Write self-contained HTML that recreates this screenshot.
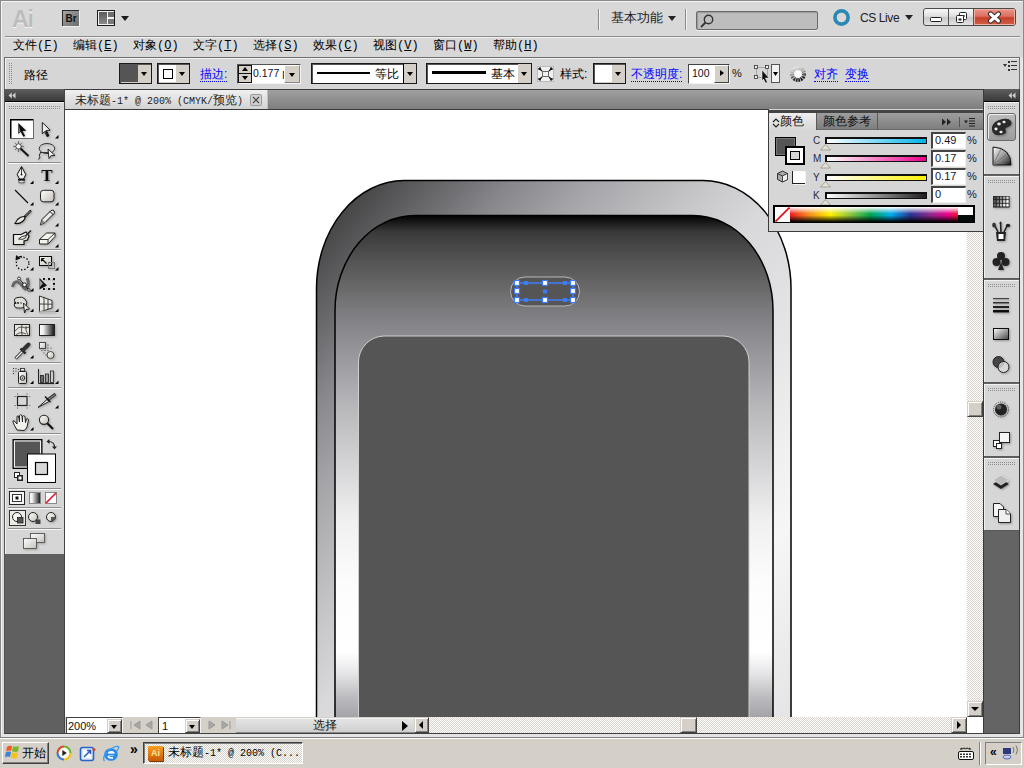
<!DOCTYPE html>
<html><head><meta charset="utf-8">
<style>
*{margin:0;padding:0;box-sizing:border-box}
html,body{width:1024px;height:768px;overflow:hidden;background:#d6d6d6;font-family:"Liberation Sans",sans-serif;font-size:12px;color:#000}
.a{position:absolute}
#frame{left:0;top:0;width:1024px;height:738px;background:#d8d8d8;border-top:1px solid #8a8a8a;border-left:1px solid #8a8a8a;border-right:1px solid #8a8a8a}
.menu span{position:absolute;top:37px;font-size:12px;line-height:16px;white-space:nowrap}
.u{text-decoration:underline}
.lk{font-size:12px;line-height:16px;color:#0000ff;border-bottom:1px dotted #0000ff;height:16px;overflow:visible}
.cn{color:#000}
.m{font-family:"Liberation Mono",monospace;font-size:10px}
</style></head><body>
<div class="a" id="frame"></div>
<!-- title row -->
<div class="a" style="left:1px;top:1px;width:1022px;height:1px;background:#f4f4f4"></div>
<div class="a" style="left:1px;top:1px;width:1px;height:736px;background:#f4f4f4"></div>
<div class="a" style="left:12px;top:6px;font-size:23px;font-weight:bold;color:#bcbcbc;letter-spacing:-1px;text-shadow:0 1px 0 #f4f4f4;line-height:26px">Ai</div>
<div class="a" style="left:62px;top:10px;width:17px;height:16px;background:linear-gradient(135deg,#a4a4a4,#6c6c6c);border-top:1px solid #2a2a2a;border-left:1px solid #2a2a2a;box-shadow:1px 1px 0 #f0f0f0;font-size:10px;font-weight:bold;color:#111;text-align:center;line-height:15px">Br</div>
<div class="a" style="left:97px;top:10px;width:18px;height:16px;border:1px solid #1c1c1c;background:#f2f2f2"></div>
<div class="a" style="left:99px;top:12px;width:8px;height:12px;background:linear-gradient(#5a5a5a,#8a8a8a)"></div>
<div class="a" style="left:108px;top:12px;width:6px;height:5px;background:#6e6e6e"></div>
<div class="a" style="left:108px;top:19px;width:6px;height:5px;background:#7a7a7a"></div>
<div class="a" style="left:121px;top:16px;width:0;height:0;border-left:4px solid transparent;border-right:4px solid transparent;border-top:5px solid #1c1c1c"></div>
<div class="a" style="left:598px;top:9px;width:1px;height:21px;background:#8a8a8a;box-shadow:1px 0 0 #f2f2f2"></div>
<div class="a" style="left:611px;top:9px;font-size:13px;line-height:18px;color:#222">基本功能</div>
<div class="a" style="left:668px;top:16px;width:0;height:0;border-left:4px solid transparent;border-right:4px solid transparent;border-top:5px solid #222"></div>
<div class="a" style="left:685px;top:9px;width:1px;height:21px;background:#8a8a8a;box-shadow:1px 0 0 #f2f2f2"></div>
<div class="a" style="left:696px;top:11px;width:122px;height:19px;border:1px solid #6a6a6a;border-radius:2px;background:#bdbdbd;box-shadow:inset 1px 1px 1px #9a9a9a,0 1px 0 #f0f0f0"></div>
<svg class="a" style="left:699px;top:13px" width="16" height="16"><circle cx="9.5" cy="6.5" r="4.2" fill="none" stroke="#333" stroke-width="1.4"/><line x1="6.5" y1="9.5" x2="2" y2="14" stroke="#333" stroke-width="1.8"/></svg>
<svg class="a" style="left:832px;top:8px" width="20" height="20"><circle cx="9.5" cy="9.5" r="6.6" fill="none" stroke="#2a88b2" stroke-width="3.6"/></svg>
<div class="a" style="left:860px;top:10px;font-size:12px;line-height:16px;color:#222;letter-spacing:-0.4px">CS Live</div>
<div class="a" style="left:905px;top:15px;width:0;height:0;border-left:4px solid transparent;border-right:4px solid transparent;border-top:5px solid #222"></div>
<div class="a" style="left:923px;top:8px;width:93px;height:18px;border:1px solid #4a4a4a;border-radius:3px;background:linear-gradient(#f8f8f8,#e0e0e0 45%,#c8c8c8 55%,#e4e4e4);overflow:hidden">
 <div class="a" style="left:24px;top:0;width:1px;height:16px;background:#555"></div>
 <div class="a" style="left:49px;top:0;width:1px;height:16px;background:#555"></div>
 <div class="a" style="left:50px;top:0;width:41px;height:16px;background:linear-gradient(#e8968a,#dc7060 45%,#c4402a 55%,#d0604a);box-shadow:inset 0 0 0 1px #f0b0a0"></div>
 <div class="a" style="left:6px;top:8px;width:12px;height:5px;background:#fff;border:1px solid #222;border-radius:1.5px"></div>
 <svg class="a" style="left:31px;top:2px" width="14" height="13"><rect x="4.5" y="1.5" width="7" height="7" rx="1" fill="#fff" stroke="#222"/><rect x="7" y="4" width="2.5" height="2" fill="#222"/><rect x="1.5" y="4.5" width="7" height="7" rx="1" fill="#fff" stroke="#222"/><rect x="3.5" y="7.5" width="3" height="2" fill="#222"/></svg>
 <svg class="a" style="left:63px;top:2px" width="16" height="13"><path d="M3.5,3 L11.5,10 M11.5,3 L3.5,10" stroke="#3a2a2a" stroke-width="5" stroke-linecap="round"/><path d="M3.5,3 L11.5,10 M11.5,3 L3.5,10" stroke="#fff" stroke-width="3" stroke-linecap="round"/></svg>
</div>

<div class="a" style="left:5px;top:36px;width:1015px;height:1px;background:#8c8c8c"></div>
<div class="a" style="left:5px;top:37px;width:1015px;height:1px;background:#f0f0f0"></div>
<!-- menu -->
<div class="menu">
<span style="left:13px">文件<span class="m" style="position:static">(<span class="u" style="position:static">F</span>)</span></span>
<span style="left:73px">编辑<span class="m" style="position:static">(<span class="u" style="position:static">E</span>)</span></span>
<span style="left:133px">对象<span class="m" style="position:static">(<span class="u" style="position:static">O</span>)</span></span>
<span style="left:193px">文字<span class="m" style="position:static">(<span class="u" style="position:static">T</span>)</span></span>
<span style="left:253px">选择<span class="m" style="position:static">(<span class="u" style="position:static">S</span>)</span></span>
<span style="left:313px">效果<span class="m" style="position:static">(<span class="u" style="position:static">C</span>)</span></span>
<span style="left:373px">视图<span class="m" style="position:static">(<span class="u" style="position:static">V</span>)</span></span>
<span style="left:433px">窗口<span class="m" style="position:static">(<span class="u" style="position:static">W</span>)</span></span>
<span style="left:493px">帮助<span class="m" style="position:static">(<span class="u" style="position:static">H</span>)</span></span>
</div>
<!-- control bar -->
<div class="a" style="left:4px;top:57px;width:1016px;height:33px;border:1px solid #6e6e6e;background:#d6d6d6;box-shadow:inset 1px 1px 0 #f2f2f2"></div>
<!-- control bar items -->
<div class="a" style="left:9px;top:63px;width:3px;height:22px;background-image:linear-gradient(90deg,transparent 50%,#d6d6d6 50%),linear-gradient(#8e8e8e 50%,transparent 50%);background-size:2px 2px"></div>
<div class="a cn" style="left:24px;top:67px;font-size:12px;line-height:16px">路径</div>
<!-- fill combo -->
<div class="a" style="left:119px;top:63px;width:33px;height:21px;border:1px solid #1a1a1a;background:#d4d0c8;box-shadow:inset 1px 1px 0 #555"></div>
<div class="a" style="left:121px;top:65px;width:17px;height:17px;background:#555"></div>
<div class="a" style="left:141px;top:72px;border-left:3px solid transparent;border-right:3px solid transparent;border-top:4px solid #000"></div>
<!-- stroke combo -->
<div class="a" style="left:157px;top:63px;width:33px;height:21px;border:1px solid #1a1a1a;background:#d4d0c8;box-shadow:inset 1px 1px 0 #555"></div>
<div class="a" style="left:159px;top:65px;width:17px;height:17px;background:#fff"></div>
<div class="a" style="left:163px;top:69px;width:10px;height:10px;border:1px solid #000"></div>
<div class="a" style="left:179px;top:72px;border-left:3px solid transparent;border-right:3px solid transparent;border-top:4px solid #000"></div>
<div class="a lk" style="left:200px;top:66px">描边:</div>
<!-- spinner -->
<div class="a" style="left:237px;top:64px;width:64px;height:20px;background:#fff;border:1px solid #555;border-right-color:#f4f4f4;border-bottom-color:#f4f4f4"></div>
<div class="a" style="left:238px;top:65px;width:14px;height:18px;background:#d4d0c8;border:1px solid #111"></div>
<div class="a" style="left:238px;top:73px;width:14px;height:1px;background:#111"></div>
<div class="a" style="left:242px;top:67px;border-left:3px solid transparent;border-right:3px solid transparent;border-bottom:4px solid #000"></div>
<div class="a" style="left:242px;top:76px;border-left:3px solid transparent;border-right:3px solid transparent;border-top:4px solid #000"></div>
<div class="a" style="left:253px;top:67px;font-size:10.5px;line-height:13px;color:#101028;width:31px;overflow:hidden;white-space:nowrap">0.177 p</div>
<div class="a" style="left:284px;top:65px;width:16px;height:18px;background:#d4d0c8;border:1px solid #888;border-top-color:#fff;border-left-color:#fff"></div>
<div class="a" style="left:289px;top:73px;border-left:3px solid transparent;border-right:3px solid transparent;border-top:4px solid #000"></div>
<!-- stroke profile combos -->
<div class="a" style="left:311px;top:63px;width:106px;height:21px;border:1px solid #1a1a1a;background:#fff;box-shadow:inset 1px 1px 0 #555"></div>
<div class="a" style="left:317px;top:72px;width:53px;height:2px;background:#000"></div>
<div class="a cn" style="left:375px;top:66px;font-size:12px;line-height:16px">等比</div>
<div class="a" style="left:403px;top:64px;width:1px;height:19px;background:#000"></div>
<div class="a" style="left:404px;top:64px;width:12px;height:19px;background:#d4d0c8"></div>
<div class="a" style="left:407px;top:72px;border-left:3px solid transparent;border-right:3px solid transparent;border-top:4px solid #000"></div>
<div class="a" style="left:426px;top:63px;width:106px;height:21px;border:1px solid #1a1a1a;background:#fff;box-shadow:inset 1px 1px 0 #555"></div>
<div class="a" style="left:432px;top:71px;width:54px;height:3px;background:#000"></div>
<div class="a cn" style="left:491px;top:66px;font-size:12px;line-height:16px">基本</div>
<div class="a" style="left:518px;top:64px;width:13px;height:19px;background:#d4d0c8"></div>
<div class="a" style="left:521px;top:72px;border-left:3px solid transparent;border-right:3px solid transparent;border-top:4px solid #000"></div>
<svg class="a" style="left:537px;top:66px" width="17" height="16"><rect x="0.5" y="0.5" width="16" height="15" fill="#f0f0f0" stroke="#bbb"/><rect x="5.5" y="5.5" width="6" height="5" fill="none" stroke="#666"/><path d="M2,2 l3,3 M2,2 v2 M2,2 h2 M15,2 l-3,3 M15,2 v2 M15,2 h-2 M2,14 l3,-3 M2,14 v-2 M2,14 h2 M15,14 l-3,-3 M15,14 v-2 M15,14 h-2" stroke="#111" stroke-width="1.2" fill="none"/></svg>
<div class="a cn" style="left:560px;top:66px;font-size:12px;line-height:16px">样式:</div>
<div class="a" style="left:593px;top:63px;width:33px;height:21px;border:1px solid #1a1a1a;background:#d4d0c8;box-shadow:inset 1px 1px 0 #555"></div>
<div class="a" style="left:595px;top:65px;width:17px;height:17px;background:#fff"></div>
<div class="a" style="left:615px;top:72px;border-left:3px solid transparent;border-right:3px solid transparent;border-top:4px solid #000"></div>
<div class="a lk" style="left:631px;top:66px">不透明度:</div>
<div class="a" style="left:688px;top:64px;width:42px;height:20px;background:#fff;border:1px solid #444;border-right-color:#f4f4f4;border-bottom-color:#f4f4f4"></div>
<div class="a" style="left:692px;top:67px;font-size:10.5px;line-height:13px;color:#101028">100</div>
<div class="a" style="left:714px;top:65px;width:15px;height:18px;background:#d4d0c8;border:1px solid #444;border-top-color:#fff;border-left-color:#fff"></div>
<div class="a" style="left:720px;top:70px;border-top:3px solid transparent;border-bottom:3px solid transparent;border-left:4px solid #000"></div>
<div class="a" style="left:732px;top:66px;font-size:11px;line-height:14px;color:#111">%</div>
<svg class="a" style="left:754px;top:64px" width="26" height="20"><rect x="2.5" y="3.5" width="11" height="10" fill="none" stroke="#777" stroke-dasharray="1,1"/><g fill="#eee" stroke="#333" stroke-width="0.8"><rect x="0.5" y="1.5" width="3" height="3"/><rect x="11.5" y="1.5" width="3" height="3"/><rect x="0.5" y="11.5" width="3" height="3"/></g><path d="M8,6 L15,14 L11.5,14 L13.5,18.5 L11.5,19 L9.5,15 L8,17 Z" fill="#111" stroke="#fff" stroke-width="0.5"/><rect x="17.5" y="0.5" width="8" height="18" fill="#f2f2f2" stroke="#555"/><path d="M19,8 h5 l-2.5,4 z" fill="#000"/></svg>
<svg class="a" style="left:790px;top:66px" width="16" height="16"><defs><linearGradient id="gr" x1="0" y1="0" x2="0.3" y2="1"><stop offset="0" stop-color="#e8e8e8"/><stop offset="0.5" stop-color="#9a9a9a"/><stop offset="1" stop-color="#1a1a1a"/></linearGradient></defs><circle cx="8" cy="8" r="6" fill="none" stroke="url(#gr)" stroke-width="4" stroke-dasharray="1.6,0.8"/><circle cx="8" cy="8" r="3.8" fill="#fafafa"/></svg>
<div class="a lk" style="left:814px;top:66px">对齐</div>
<div class="a lk" style="left:845px;top:66px">变换</div>
<svg class="a" style="left:1002px;top:60px" width="16" height="12"><path d="M1,4 h4 l-2,3 z" fill="#333"/><g fill="#333"><rect x="6" y="1" width="2" height="2"/><rect x="9" y="1" width="6" height="1"/><rect x="6" y="5" width="2" height="2"/><rect x="9" y="5" width="6" height="1"/><rect x="6" y="9" width="2" height="2"/><rect x="9" y="9" width="6" height="1"/></g></svg>
<!-- doc tab row -->
<div class="a" style="left:65px;top:89px;width:919px;height:21px;background:linear-gradient(#a0a0a0,#7e7e7e);border-top:1px solid #3a3a3a;border-bottom:1px solid #3a3a3a"></div>
<div class="a" style="left:65px;top:90px;width:203px;height:19px;background:linear-gradient(#f0f0f0,#d2d2d2);border-right:1px solid #c0c0c0"></div>
<div class="a" style="left:75px;top:92px;font-size:12px;line-height:16px;color:#222;white-space:pre">未标题<span class="m">-1* @ 200% (CMYK/</span>预览<span class="m">)</span></div>
<div class="a" style="left:250px;top:94px;width:12px;height:12px;border:1px solid #9a9a9a;border-radius:2px;background:#cfcfcf"></div>
<svg class="a" style="left:250px;top:94px" width="12" height="12"><path d="M3,3 L9,9 M9,3 L3,9" stroke="#444" stroke-width="1.1"/></svg>

<!-- tools panel -->
<div class="a" style="left:4px;top:89px;width:61px;height:645px;background:#606060;border-left:1px solid #555;border-right:1px solid #444"></div>
<div class="a" style="left:5px;top:89px;width:59px;height:13px;background:linear-gradient(#5e5e5e,#3a3a3a);border-bottom:1px solid #000"></div>
<svg class="a" style="left:8px;top:92px" width="10" height="8"><path d="M0.5,3.5 L3.8,0.5 V6.5 Z M4.2,3.5 L7.5,0.5 V6.5 Z" fill="#d0d0d0"/></svg>
<div class="a" style="left:5px;top:102px;width:59px;height:452px;background:#d6d6d6;box-shadow:inset 1px 1px 0 #f2f2f2"></div>
<div class="a" style="left:9px;top:106px;width:52px;height:4px;background-image:linear-gradient(90deg,transparent 50%,#d6d6d6 50%),linear-gradient(#8e8e8e 50%,transparent 50%);background-size:2px 2px"></div>
<svg class="a" style="left:0;top:0" width="66" height="560">
<defs>
<linearGradient id="tw" x1="0" y1="0" x2="1" y2="1"><stop offset="0" stop-color="#fff"/><stop offset="1" stop-color="#c4c0b8"/></linearGradient>
<linearGradient id="tg" x1="0" y1="0" x2="1" y2="0"><stop offset="0" stop-color="#fff"/><stop offset="0.25" stop-color="#eee"/><stop offset="1" stop-color="#111"/></linearGradient>
<filter id="sh" x="-30%" y="-30%" width="160%" height="160%"><feDropShadow dx="1" dy="1" stdDeviation="0.8" flood-color="#000" flood-opacity="0.25"/></filter>
</defs>
<rect x="8" y="162" width="53" height="1" fill="#8e8e8e"/><rect x="8" y="163" width="53" height="1" fill="#f8f8f8"/><rect x="8" y="249" width="53" height="1" fill="#8e8e8e"/><rect x="8" y="250" width="53" height="1" fill="#f8f8f8"/><rect x="8" y="317" width="53" height="1" fill="#8e8e8e"/><rect x="8" y="318" width="53" height="1" fill="#f8f8f8"/><rect x="8" y="362" width="53" height="1" fill="#8e8e8e"/><rect x="8" y="363" width="53" height="1" fill="#f8f8f8"/><rect x="8" y="387" width="53" height="1" fill="#8e8e8e"/><rect x="8" y="388" width="53" height="1" fill="#f8f8f8"/><rect x="8" y="433" width="53" height="1" fill="#8e8e8e"/><rect x="8" y="434" width="53" height="1" fill="#f8f8f8"/><rect x="8" y="488" width="53" height="1" fill="#8e8e8e"/><rect x="8" y="489" width="53" height="1" fill="#f8f8f8"/><rect x="8" y="507" width="53" height="1" fill="#8e8e8e"/><rect x="8" y="508" width="53" height="1" fill="#f8f8f8"/><rect x="8" y="528" width="53" height="1" fill="#8e8e8e"/><rect x="8" y="529" width="53" height="1" fill="#f8f8f8"/>
<path d="M55,138.5 h3.5 v-3.5 z" fill="#000"/><path d="M30,184 h3.5 v-3.5 z" fill="#000"/><path d="M55,184 h3.5 v-3.5 z" fill="#000"/><path d="M30,205.5 h3.5 v-3.5 z" fill="#000"/><path d="M55,205.5 h3.5 v-3.5 z" fill="#000"/><path d="M55,226.5 h3.5 v-3.5 z" fill="#000"/><path d="M55,247.5 h3.5 v-3.5 z" fill="#000"/><path d="M30,270.5 h3.5 v-3.5 z" fill="#000"/><path d="M55,270.5 h3.5 v-3.5 z" fill="#000"/><path d="M30,291.5 h3.5 v-3.5 z" fill="#000"/><path d="M30,312 h3.5 v-3.5 z" fill="#000"/><path d="M55,312 h3.5 v-3.5 z" fill="#000"/><path d="M30,358.5 h3.5 v-3.5 z" fill="#000"/><path d="M30,384 h3.5 v-3.5 z" fill="#000"/><path d="M55,384 h3.5 v-3.5 z" fill="#000"/><path d="M55,408.5 h3.5 v-3.5 z" fill="#000"/><path d="M30,430.5 h3.5 v-3.5 z" fill="#000"/>
<rect x="10.5" y="119.5" width="23" height="19" fill="#fff" stroke="#666" stroke-width="1"/>
<rect x="10" y="119" width="23" height="1.5" fill="#000"/><rect x="10" y="119" width="1.5" height="19" fill="#000"/>
<path d="M18.3,123 L26.3,130.8 L22.5,131 L25.2,136 L23.3,136.8 L20.8,131.8 L18.3,134 Z" fill="#111" filter="url(#sh)"/>
<path d="M18.8,125 L18.8,133 L20.5,131.5 Z" fill="#777"/>
<path d="M42.3,122.5 L50.2,130.2 L46.4,130.5 L49,135.8 L47,136.6 L44.6,131.5 L42.3,133.8 Z" fill="#eeece6" stroke="#111" stroke-width="0.9" filter="url(#sh)"/>
<path d="M45,131 L47.2,136.5 L49,135.8 L46.4,130.5 Z" fill="#111"/>
<g filter="url(#sh)"><path d="M13,146.4 h11 M18.5,141 v11 M14.8,142.7 l7.4,7.4 M22.2,142.7 l-7.4,7.4" stroke="#666" stroke-width="0.9"/><circle cx="18.5" cy="146.4" r="2.6" fill="#f8f8f4" stroke="#333" stroke-width="0.8"/><path d="M20.5,148.5 L28.5,156" stroke="#111" stroke-width="1.8"/></g>
<g filter="url(#sh)"><ellipse cx="47" cy="148.5" rx="7.8" ry="5" fill="none" stroke="#333" stroke-width="1"/><path d="M48,149 L55,155.5 L51.2,155.6 L49,158.5 Z" fill="#f4f2ec" stroke="#111" stroke-width="0.9"/><path d="M41,152 q-3,3 -1,6 M40,158 l-2,1.5" stroke="#333" stroke-width="1" fill="none"/><line x1="40" y1="152.5" x2="48" y2="152.5" stroke="#333"/></g>
<g filter="url(#sh)"><path d="M21.5,166.5 L25.8,174.5 L23.5,179 H19.5 L17.2,174.5 Z" fill="#f2f0ea" stroke="#111" stroke-width="1"/><line x1="21.5" y1="167" x2="21.5" y2="174" stroke="#111" stroke-width="0.8"/><circle cx="21.5" cy="174.6" r="0.9" fill="#111"/><rect x="18" y="179" width="7" height="1.4" fill="#111"/><rect x="19" y="180.3" width="5" height="2.6" fill="#ddd" stroke="#222" stroke-width="0.6"/></g>
<text x="47" y="181" font-family="Liberation Serif" font-size="17" font-weight="bold" text-anchor="middle" fill="#111" filter="url(#sh)">T</text>
<line x1="15" y1="190" x2="28" y2="203" stroke="#111" stroke-width="1.2"/>
<rect x="40.5" y="190.3" width="13.5" height="11.5" rx="3" fill="url(#tw)" stroke="#222" stroke-width="1" filter="url(#sh)"/>
<g filter="url(#sh)"><path d="M31,210.5 L24.5,217" stroke="#111" stroke-width="2.4"/><path d="M30.5,211 L25,216.5" stroke="#ddd" stroke-width="0.7"/><path d="M25,216.5 Q21,216 17.5,219.5 L15,223.5 Q19.5,224 22.5,221.5 Q25.5,219 25,216.5 Z" fill="#e8e6e0" stroke="#111" stroke-width="1.1"/></g>
<g filter="url(#sh)"><path d="M40.3,225 L42,219.5 L51,210.5 Q53,209.5 54,211 Q55,212.5 54,213.5 L45,222.5 Z" fill="#eceae4" stroke="#111" stroke-width="1"/><path d="M40.3,225 L42,219.5 L45,222.5 Z" fill="#888"/><path d="M50,211.5 L53,214.5" stroke="#111"/></g>
<g filter="url(#sh)"><path d="M13.5,234.5 H21 L26,232 L29,236 L27.5,240 L24,241 V244.5 H13.5 Z" fill="#eceae4" stroke="#111" stroke-width="1.2"/><path d="M31,230.5 L26,235.5" stroke="#222" stroke-width="1.4"/><path d="M26,235.5 Q21,236 18.5,239 Q23,240.5 26,237.5 Z" fill="#e4e2dc" stroke="#222" stroke-width="0.9"/></g>
<g filter="url(#sh)"><path d="M39.5,239.5 L46.5,233 H55 V236.5 L48,244 H39.5 Z" fill="#f4f2ec" stroke="#222" stroke-width="1"/><path d="M39.5,239.5 H48 L55,233 M48,239.5 V244" stroke="#222" fill="none" stroke-width="0.9"/></g>
<g><circle cx="22.6" cy="263.5" r="6.3" fill="none" stroke="#111" stroke-width="1.4" stroke-dasharray="1.4,1.9" stroke-dashoffset="0"/><rect x="14" y="255" width="7" height="5" fill="#d6d6d6"/><path d="M22,256.5 Q19,256.5 17.5,258" stroke="#111" stroke-width="1.3" fill="none"/><path d="M16,255 L20.5,258.5 L15.5,260.5 Z" fill="#111"/></g>
<g filter="url(#sh)"><rect x="39.5" y="256.5" width="12" height="9" fill="url(#tw)" stroke="#111" stroke-width="1"/><path d="M41.5,258.5 L46.5,263.5 M41.5,258.5 h3 M41.5,258.5 v3" stroke="#111" stroke-width="1.2" fill="none"/><rect x="48.5" y="262.5" width="6" height="6" fill="none" stroke="#777" stroke-width="1"/></g>
<g filter="url(#sh)"><path d="M12.5,287 Q14,281 18,282 Q22,284 24,288 Q26,291 28,286 Q29,281 27,278" fill="none" stroke="#666" stroke-width="3"/><path d="M19,278.5 L29,290" stroke="#111" stroke-width="0.9"/><circle cx="19" cy="278.5" r="1.4" fill="#fff" stroke="#111" stroke-width="0.8"/><circle cx="24.5" cy="284.8" r="1.9" fill="#fff" stroke="#111" stroke-width="0.9"/><circle cx="29" cy="290" r="1.3" fill="#fff" stroke="#111" stroke-width="0.8"/></g>
<g><g fill="#111"><rect x="43" y="278" width="2" height="2"/><rect x="48" y="278" width="2" height="2"/><rect x="53" y="278" width="2" height="2"/><rect x="53" y="283" width="2" height="2"/><rect x="43" y="288" width="2" height="2"/><rect x="48" y="288" width="2" height="2"/><rect x="53" y="288" width="2" height="2"/></g><path d="M44,280 H54 V289 H44" fill="none" stroke="#555" stroke-width="0.5" stroke-dasharray="1,1"/><path d="M39.5,278 L47,285.5 L39.5,289.5 Z" fill="#111"/><path d="M39.5,279.5 L43,283.5 L39.5,287.5 Z" fill="#999"/></g>
<g filter="url(#sh)"><path d="M15,302 Q13,298 18,297.5 Q22,296 25,299 Q28,302 26,306 Q22,309 17,308 Q13,307 15,302 Z" fill="#e0ded8" stroke="#222" stroke-width="1"/><circle cx="15.5" cy="303" r="0.9" fill="#111"/><circle cx="18" cy="303" r="0.9" fill="#111"/><circle cx="21" cy="303" r="0.7" fill="#111"/><path d="M23.5,303 L29.5,309 L26,309.5 L24.5,313 Z" fill="#f0eee8" stroke="#111" stroke-width="0.9"/></g>
<g filter="url(#sh)"><path d="M39.5,296 L52,300.5 V308 L39.5,312 Z" fill="#eceae4" stroke="#333" stroke-width="1"/><path d="M39.5,304 L52,304.2 M44,297.5 V310.5 M48,299 V309.5" stroke="#333" fill="none" stroke-width="0.9"/><path d="M39.5,311.5 L55,311.5" stroke="#aaa" stroke-width="1.5"/></g>
<g filter="url(#sh)"><rect x="14.5" y="324.5" width="15" height="11" fill="#e8e6e0" stroke="#222" stroke-width="1"/><path d="M15,331 Q19,326 22,327 Q26,329 29,327 M22,325 Q21,330 22,335 M16,335 Q20,331 26,334 M26,326 Q25,330 28,335" fill="none" stroke="#333" stroke-width="0.8"/></g>
<rect x="39.5" y="324.5" width="15" height="11" fill="url(#tg)" stroke="#222" stroke-width="1" filter="url(#sh)"/>
<g filter="url(#sh)"><path d="M15.5,358.5 L23,351" stroke="#222" stroke-width="3"/><path d="M15.8,358.2 L23,351" stroke="#f0f0f0" stroke-width="1.4"/><path d="M20.5,348.5 L25.5,353.5" stroke="#222" stroke-width="2.4"/><path d="M23.5,349.5 L28.5,344.5" stroke="#333" stroke-width="4" stroke-linecap="round"/></g>
<g filter="url(#sh)"><rect x="39.5" y="342.5" width="6" height="6" fill="url(#tw)" stroke="#444" stroke-width="1"/><circle cx="50.5" cy="355" r="3.5" fill="url(#tw)" stroke="#444" stroke-width="1"/><g fill="#333"><circle cx="48" cy="345" r="0.6"/><circle cx="48" cy="348" r="0.6"/><circle cx="42" cy="350.5" r="0.6"/><circle cx="45" cy="350.5" r="0.6"/><circle cx="48" cy="350.5" r="0.6"/><circle cx="51" cy="348" r="0.6"/><circle cx="44" cy="353" r="0.6"/><circle cx="46" cy="355" r="0.6"/></g></g>
<g filter="url(#sh)"><g fill="#222"><circle cx="13.5" cy="368.5" r="0.6"/><circle cx="16" cy="368.5" r="0.6"/><circle cx="18.5" cy="369.5" r="0.6"/><circle cx="13.5" cy="371" r="0.6"/><circle cx="16" cy="371" r="0.6"/><circle cx="13.5" cy="373.5" r="0.6"/></g><rect x="20.5" y="368.5" width="4" height="2.5" fill="#eee" stroke="#222" stroke-width="0.8"/><rect x="18.5" y="371.5" width="8" height="12" rx="1" fill="url(#tw)" stroke="#222" stroke-width="1"/><circle cx="22.5" cy="378" r="2.3" fill="none" stroke="#222" stroke-width="1"/><circle cx="22.5" cy="378" r="0.8" fill="#222"/></g>
<g filter="url(#sh)"><path d="M38.5,369 V383.5 H54" stroke="#222" fill="none" stroke-width="1"/><rect x="40.5" y="375.5" width="3" height="7" fill="#666" stroke="#222" stroke-width="0.8"/><rect x="45.5" y="374" width="3" height="8.5" fill="#999" stroke="#222" stroke-width="0.8"/><rect x="50.5" y="371" width="3" height="11.5" fill="#ccc" stroke="#222" stroke-width="0.8"/></g>
<g><rect x="17.5" y="396.5" width="9.5" height="9" fill="none" stroke="#222" stroke-width="1.2"/><path d="M17.5,393 v2 M27,393 v2 M17.5,407 v2 M27,407 v2 M14,396.5 h2 M14,405.5 h2 M28.5,396.5 h2 M28.5,405.5 h2" stroke="#888" stroke-width="0.9"/></g>
<g filter="url(#sh)"><path d="M38,407.5 L47,399.5 L49,401.5 Z" fill="#e8e6e0" stroke="#222" stroke-width="1"/><path d="M47.5,400 L55.5,394" stroke="#333" stroke-width="3"/><path d="M47.5,400 L55,394.5" stroke="#999" stroke-width="1"/><path d="M45,396.5 L50.5,402" stroke="#111" stroke-width="1.2"/></g>
<g filter="url(#sh)"><path d="M17,430 Q14,425 13,422 Q12.5,420 14.5,421 L17,424 V417 Q17,415.5 18.5,416 L19.5,422 V415.5 Q20.5,414 22,415.5 L22.5,422 V416.5 Q23.5,415 25,416.5 L25.5,422.5 L26.5,419 Q28,418 28.5,420 L27,427 Q25.5,430 24,430.5 Z" fill="#f2f0ea" stroke="#222" stroke-width="1"/></g>
<g filter="url(#sh)"><circle cx="44" cy="419.8" r="4.6" fill="url(#tw)" stroke="#222" stroke-width="1.1"/><path d="M47.3,423.2 L53,429" stroke="#111" stroke-width="2"/></g>
<!-- fill/stroke -->
<rect x="12.5" y="439" width="30" height="30" fill="#000"/><rect x="13.8" y="440.3" width="27.4" height="27.4" fill="#f4f4f4"/><rect x="15" y="441.5" width="25" height="25" fill="#555"/>
<rect x="27" y="453.5" width="29" height="29.5" fill="#000"/><rect x="28" y="454.5" width="27" height="27.5" fill="#fff"/><rect x="35.5" y="462.5" width="12" height="12" fill="#d8d8d8" stroke="#000" stroke-width="1.2"/>
<path d="M48.5,441.5 Q54.5,441.5 54.5,447.5" stroke="#222" stroke-width="1.1" fill="none"/><path d="M46.5,441.5 L49.5,439 V444 Z M54.5,449.5 L52,446.5 H57 Z" fill="#222"/>
<rect x="14.5" y="472.5" width="5" height="5" fill="#fff" stroke="#222" stroke-width="1"/><rect x="17.5" y="475.5" width="5" height="5" fill="#222" stroke="#222" stroke-width="1"/><rect x="18.5" y="476.5" width="3" height="3" fill="#fff"/>
<!-- color mode -->
<rect x="9.5" y="491.5" width="15" height="13" fill="#f4f4f4" stroke="#222" stroke-width="1"/><rect x="12.5" y="494.5" width="9" height="7" fill="#fff" stroke="#222" stroke-width="0.9"/><rect x="15.5" y="496.5" width="3" height="3" fill="#111"/>
<rect x="29.5" y="492.5" width="11" height="11" fill="url(#tg)" stroke="#888" stroke-width="1"/>
<rect x="45.5" y="492.5" width="11" height="11" fill="#fff" stroke="#888" stroke-width="1"/><path d="M46,503 L56,493" stroke="#e0102a" stroke-width="1.6"/>
<!-- draw modes -->
<rect x="9.5" y="510.5" width="16" height="15" fill="#eceae4" stroke="#333" stroke-width="1"/>
<circle cx="17" cy="517" r="4.5" fill="#f4f4f4" stroke="#222" stroke-width="1"/><rect x="17.5" y="517.5" width="5.5" height="5.5" fill="#555" stroke="#222" stroke-width="0.8"/>
<circle cx="33" cy="517" r="4.5" fill="url(#tw)" stroke="#222" stroke-width="1" filter="url(#sh)"/><rect x="35.5" y="519.5" width="5" height="4.5" fill="#444"/>
<circle cx="51" cy="517" r="4.5" fill="url(#tw)" stroke="#222" stroke-width="1" filter="url(#sh)"/><path d="M51,517 h4.5 a4.5,4.5 0 0 1 -4.5,4.5 z" fill="#555"/>
<!-- screen mode -->
<g filter="url(#sh)"><rect x="30.5" y="533.5" width="14" height="9" fill="url(#tw)" stroke="#444" stroke-width="0.8"/><rect x="23.5" y="538.5" width="13" height="10" fill="url(#tw)" stroke="#444" stroke-width="0.8"/></g>
</svg>
<!-- canvas -->
<div class="a" style="left:65px;top:110px;width:902px;height:607px;background:#fff;overflow:hidden"></div>
<svg class="a" style="left:65px;top:110px" width="902" height="607" viewBox="65 110 902 607">
<defs>
<linearGradient id="go" gradientUnits="userSpaceOnUse" x1="316" y1="180" x2="862.25" y2="663">
<stop offset="0" stop-color="#2e2e2e"/><stop offset="0.102" stop-color="#5a5a5c"/><stop offset="0.157" stop-color="#727276"/><stop offset="0.203" stop-color="#88888c"/><stop offset="0.255" stop-color="#9a9a9e"/><stop offset="0.281" stop-color="#a4a4a8"/><stop offset="0.411" stop-color="#c8c8cb"/><stop offset="0.482" stop-color="#d8d8da"/><stop offset="0.591" stop-color="#e2e2e4"/><stop offset="0.727" stop-color="#f0f0f0"/><stop offset="0.8" stop-color="#f6f6f6"/><stop offset="1" stop-color="#e2e2e4"/>
</linearGradient>
<linearGradient id="gi" gradientUnits="userSpaceOnUse" x1="0" y1="215" x2="0" y2="717">
<stop offset="0" stop-color="#000"/><stop offset="0.014" stop-color="#181818"/><stop offset="0.034" stop-color="#3a3a3a"/><stop offset="0.09" stop-color="#535353"/><stop offset="0.143" stop-color="#686868"/><stop offset="0.197" stop-color="#7e7e82"/><stop offset="0.24" stop-color="#8c8c90"/><stop offset="0.37" stop-color="#b4b4b8"/><stop offset="0.51" stop-color="#d8d8da"/><stop offset="0.61" stop-color="#f0f0f0"/><stop offset="0.73" stop-color="#fcfcfc"/><stop offset="0.87" stop-color="#fff"/><stop offset="0.91" stop-color="#e8e8ea"/><stop offset="0.96" stop-color="#bcbcc0"/><stop offset="1" stop-color="#a4a4a8"/>
</linearGradient>
</defs>
<path d="M404,180.5 H703 A88,108 0 0 1 791,288.5 V760 H316.5 V288.5 A88,108 0 0 1 404,180.5 Z" fill="url(#go)" stroke="#000" stroke-width="1.5"/>
<path d="M415,215.5 H693 A80,95 0 0 1 773,310.5 V760 H335 V310.5 A80,95 0 0 1 415,215.5 Z" fill="url(#gi)" stroke="#000" stroke-width="1.5"/>
<path d="M384,336 H723 A26,26 0 0 1 749,362 V760 H358.5 V362 A26,26 0 0 1 384,336 Z" fill="#555" stroke="#cfcfcf" stroke-width="1"/>
<rect x="510.5" y="277" width="69" height="29" rx="14.5" fill="#555" stroke="#b8b8b8" stroke-width="1"/>
<rect x="517" y="283" width="56" height="17" fill="none" stroke="#3f7cf2" stroke-width="1.6"/>
<line x1="545" y1="283" x2="545" y2="300" stroke="#4a7fe8" stroke-width="1" stroke-dasharray="2,3" opacity="0"/>
<g fill="#fff" stroke="#3f7cf2" stroke-width="1.2">
<rect x="514.5" y="280.5" width="5" height="5"/><rect x="542.5" y="280.5" width="5" height="5"/><rect x="570.5" y="280.5" width="5" height="5"/>
<rect x="514.5" y="288.5" width="5" height="5"/><rect x="570.5" y="288.5" width="5" height="5"/>
<rect x="514.5" y="297.5" width="5" height="5"/><rect x="542.5" y="297.5" width="5" height="5"/><rect x="570.5" y="297.5" width="5" height="5"/>
</g>
<rect x="543" y="289.5" width="4" height="4" fill="#3f7cf2"/>
<g fill="#3f7cf2"><rect x="524" y="281" width="4" height="4"/><rect x="563" y="281" width="4" height="4"/><rect x="524" y="298" width="4" height="4"/><rect x="563" y="298" width="4" height="4"/></g>
</svg>


<!-- right dock -->
<div class="a" style="left:983px;top:89px;width:37px;height:645px;background:#646464;border-left:1px solid #3a3a3a;border-right:1px solid #3a3a3a"></div>
<div class="a" style="left:1020px;top:57px;width:3px;height:678px;background:#e6e6e6"></div>
<div class="a" style="left:984px;top:89px;width:35px;height:13px;background:linear-gradient(#5e5e5e,#3a3a3a);border-bottom:1px solid #000"></div>
<svg class="a" style="left:1008px;top:92px" width="10" height="8"><path d="M0.5,3.5 L3.8,0.5 V6.5 Z M4.2,3.5 L7.5,0.5 V6.5 Z" fill="#d0d0d0"/></svg>
<div class="a" style="left:984px;top:102px;width:35px;height:73px;background:#d6d6d6;border-bottom:1px solid #5a5a5a;box-shadow:inset 1px 1px 0 #f2f2f2"></div>
<div class="a" style="left:988px;top:106px;width:28px;height:4px;background-image:linear-gradient(90deg,transparent 50%,#d6d6d6 50%),linear-gradient(#8e8e8e 50%,transparent 50%);background-size:2px 2px"></div>
<div class="a" style="left:984px;top:176px;width:35px;height:103px;background:#d6d6d6;border-bottom:1px solid #5a5a5a;box-shadow:inset 1px 1px 0 #f2f2f2"></div>
<div class="a" style="left:988px;top:180px;width:28px;height:4px;background-image:linear-gradient(90deg,transparent 50%,#d6d6d6 50%),linear-gradient(#8e8e8e 50%,transparent 50%);background-size:2px 2px"></div>
<div class="a" style="left:984px;top:280px;width:35px;height:103px;background:#d6d6d6;border-bottom:1px solid #5a5a5a;box-shadow:inset 1px 1px 0 #f2f2f2"></div>
<div class="a" style="left:988px;top:284px;width:28px;height:4px;background-image:linear-gradient(90deg,transparent 50%,#d6d6d6 50%),linear-gradient(#8e8e8e 50%,transparent 50%);background-size:2px 2px"></div>
<div class="a" style="left:984px;top:384px;width:35px;height:73px;background:#d6d6d6;border-bottom:1px solid #5a5a5a;box-shadow:inset 1px 1px 0 #f2f2f2"></div>
<div class="a" style="left:988px;top:388px;width:28px;height:4px;background-image:linear-gradient(90deg,transparent 50%,#d6d6d6 50%),linear-gradient(#8e8e8e 50%,transparent 50%);background-size:2px 2px"></div>
<div class="a" style="left:984px;top:458px;width:35px;height:73px;background:#d6d6d6;border-bottom:1px solid #5a5a5a;box-shadow:inset 1px 1px 0 #f2f2f2"></div>
<div class="a" style="left:988px;top:462px;width:28px;height:4px;background-image:linear-gradient(90deg,transparent 50%,#d6d6d6 50%),linear-gradient(#8e8e8e 50%,transparent 50%);background-size:2px 2px"></div>
<div class="a" style="left:987px;top:113px;width:29px;height:28px;border:1px solid #6a6a6a;border-radius:3px;background:linear-gradient(#bdbdbd,#9c9c9c);box-shadow:inset 1px 1px 0 #eee"></div>
<svg class="a" style="left:0;top:0" width="1024" height="540" style="pointer-events:none">
<defs><linearGradient id="dg" x1="0" y1="0" x2="1" y2="1"><stop offset="0" stop-color="#fff"/><stop offset="1" stop-color="#444"/></linearGradient>
<filter id="sh2" x="-30%" y="-30%" width="160%" height="160%"><feDropShadow dx="1" dy="1" stdDeviation="0.8" flood-color="#000" flood-opacity="0.3"/></filter></defs>
<g filter="url(#sh2)"><path d="M992,130 Q991,123 999,120 Q1008,117 1011,121 Q1013,125 1008,127 Q1004,128 1006,131 Q1007,134 1000,135 Q993,136 992,130 Z" fill="#2a2a2a"/><ellipse cx="999" cy="124" rx="1.8" ry="1.4" fill="#f0f0f0"/><ellipse cx="1004" cy="122" rx="1.6" ry="1.3" fill="#f0f0f0"/><ellipse cx="996" cy="129" rx="1.6" ry="1.4" fill="#f0f0f0"/><ellipse cx="1001" cy="132" rx="1.6" ry="1.3" fill="#f0f0f0"/></g>
<g filter="url(#sh2)"><defs><linearGradient id="cg" x1="0" y1="0" x2="1" y2="1"><stop offset="0" stop-color="#fff"/><stop offset="0.6" stop-color="#888"/><stop offset="1" stop-color="#111"/></linearGradient></defs><path d="M993,165 V147 Q1011,148 1011,165 Z" fill="url(#cg)" stroke="#111" stroke-width="1"/><path d="M993,165 L1001,149 M993,165 L1007,154 M993,165 L1010,160" stroke="#666" stroke-width="0.7"/></g>
<g filter="url(#sh2)"><rect x="993" y="196" width="16.5" height="11.5" fill="#1a1a1a"/><rect x="993.5" y="196.5" width="2.4" height="2.8" fill="#444"/><rect x="996.7" y="196.5" width="2.4" height="2.8" fill="#666"/><rect x="999.9" y="196.5" width="2.4" height="2.8" fill="#888"/><rect x="1003.1" y="196.5" width="2.4" height="2.8" fill="#aaa"/><rect x="1006.3" y="196.5" width="2.4" height="2.8" fill="#ddd"/><rect x="993.5" y="200.1" width="2.4" height="2.8" fill="#555"/><rect x="996.7" y="200.1" width="2.4" height="2.8" fill="#777"/><rect x="999.9" y="200.1" width="2.4" height="2.8" fill="#999"/><rect x="1003.1" y="200.1" width="2.4" height="2.8" fill="#ccc"/><rect x="1006.3" y="200.1" width="2.4" height="2.8" fill="#fff"/><rect x="993.5" y="203.7" width="2.4" height="2.8" fill="#666"/><rect x="996.7" y="203.7" width="2.4" height="2.8" fill="#888"/><rect x="999.9" y="203.7" width="2.4" height="2.8" fill="#bbb"/><rect x="1003.1" y="203.7" width="2.4" height="2.8" fill="#eee"/><rect x="1006.3" y="203.7" width="2.4" height="2.8" fill="#fff"/></g>
<g filter="url(#sh2)"><path d="M996,232 H1006 L1005,241 H997 Z" fill="#222"/><rect x="998.5" y="234" width="5" height="5" fill="#fff"/><path d="M998,232 L994.5,225 M1001,232 L1000.5,222 M1004,232 L1007,226" stroke="#222" stroke-width="1.6"/><ellipse cx="994" cy="225" rx="1.8" ry="2.5" fill="#333"/><path d="M1000.5,221 l-1,3 h2 z" fill="#222"/><ellipse cx="1008" cy="225.5" rx="2.2" ry="1.8" fill="#222"/></g>
<g filter="url(#sh2)"><circle cx="1001" cy="256" r="4" fill="#222"/><circle cx="996.5" cy="262" r="4" fill="#222"/><circle cx="1005.5" cy="262" r="4" fill="#222"/><path d="M1001,262 L998,270 H1004 Z" fill="#222"/></g>
<g filter="url(#sh2)"><rect x="993" y="298" width="16" height="1.2" fill="#444"/><rect x="993" y="302" width="16" height="1.5" fill="#333"/><rect x="993" y="306" width="16" height="2" fill="#222"/><rect x="993" y="310" width="16" height="2.5" fill="#111"/></g>
<g filter="url(#sh2)"><rect x="993.5" y="328.5" width="15" height="11" fill="url(#dg)" stroke="#111" stroke-width="1"/></g>
<g filter="url(#sh2)"><circle cx="998.5" cy="362" r="5.5" fill="#444" stroke="#222"/><circle cx="1003.5" cy="367" r="5.5" fill="#ddd" fill-opacity="0.8" stroke="#222"/></g>
<g filter="url(#sh2)"><circle cx="1001" cy="409.5" r="7.5" fill="none" stroke="#444" stroke-width="1" stroke-dasharray="1,1"/><circle cx="1001" cy="409.5" r="6" fill="#222"/><circle cx="999" cy="407" r="2.5" fill="#888" opacity="0.6"/></g>
<g filter="url(#sh2)"><rect x="999.5" y="432.5" width="10" height="10" fill="#f4f4f4" stroke="#222"/><rect x="993.5" y="440.5" width="6" height="6" fill="#fff" stroke="#222"/><rect x="996.5" y="443.5" width="5" height="5" fill="#fff" stroke="#222"/></g>
<g filter="url(#sh2)"><path d="M993,484 L1001,479 L1009,484 L1001,489 Z" fill="#222"/><path d="M993,480 L1001,475 L1009,480 L1001,485 Z" fill="#bbb" stroke="#eee" stroke-width="0.6"/></g>
<g filter="url(#sh2)"><path d="M993.5,503.5 H1000 L1003.5,507 V516.5 H993.5 Z" fill="#f4f4f4" stroke="#222"/><path d="M998.5,509.5 H1006 L1010.5,514 V522.5 H998.5 Z" fill="#f0f0f0" stroke="#222"/><path d="M1006,509.5 V514 H1010.5" fill="#fff" stroke="#222" stroke-width="0.8"/></g>
</svg>

<!-- scrollbars -->
<div class="a" style="left:967px;top:110px;width:16px;height:607px;background-color:#fff;background-image:linear-gradient(45deg,#d8d4cc 25%,transparent 25%,transparent 75%,#d8d4cc 75%),linear-gradient(45deg,#d8d4cc 25%,transparent 25%,transparent 75%,#d8d4cc 75%);background-size:2px 2px;background-position:0 0,1px 1px"></div>
<div class="a" style="left:967px;top:401px;width:16px;height:16px;background:#d4d0c8;border:1px solid;border-color:#d4d0c8 #404040 #404040 #d4d0c8;box-shadow:inset 1px 1px 0 #fff,inset -1px -1px 0 #808080"></div>
<div class="a" style="left:967px;top:701px;width:16px;height:16px;background:#d4d0c8;border:1px solid;border-color:#d4d0c8 #404040 #404040 #d4d0c8;box-shadow:inset 1px 1px 0 #fff,inset -1px -1px 0 #808080"></div>
<div class="a" style="left:971px;top:707px;border-left:4px solid transparent;border-right:4px solid transparent;border-top:4px solid #000"></div>
<!-- status bar -->
<div class="a" style="left:65px;top:717px;width:902px;height:17px;background:#d4d0c8"></div>
<div class="a" style="left:415px;top:717px;width:552px;height:17px;background-color:#fff;background-image:linear-gradient(45deg,#d8d4cc 25%,transparent 25%,transparent 75%,#d8d4cc 75%),linear-gradient(45deg,#d8d4cc 25%,transparent 25%,transparent 75%,#d8d4cc 75%);background-size:2px 2px;background-position:0 0,1px 1px"></div>
<div class="a" style="left:680px;top:717px;width:17px;height:16px;background:#d4d0c8;border:1px solid;border-color:#d4d0c8 #404040 #404040 #d4d0c8;box-shadow:inset 1px 1px 0 #fff,inset -1px -1px 0 #808080"></div>
<div class="a" style="left:951px;top:717px;width:16px;height:16px;background:#d4d0c8;border:1px solid;border-color:#d4d0c8 #404040 #404040 #d4d0c8;box-shadow:inset 1px 1px 0 #fff,inset -1px -1px 0 #808080"></div>
<div class="a" style="left:957px;top:721px;border-top:4px solid transparent;border-bottom:4px solid transparent;border-left:4px solid #000"></div>
<div class="a" style="left:967px;top:717px;width:16px;height:16px;background:#fff"></div>
<div class="a" style="left:66px;top:717px;width:57px;height:17px;background:#fff;border:1px solid #404040;border-right-color:#f4f4f4;border-bottom-color:#f4f4f4"></div>
<div class="a" style="left:68px;top:720px;font-size:11px;line-height:13px;color:#111">200%</div>
<div class="a" style="left:107px;top:719px;width:15px;height:14px;background:#d4d0c8;border:1px solid;border-color:#d4d0c8 #404040 #404040 #d4d0c8;box-shadow:inset 1px 1px 0 #fff,inset -1px -1px 0 #808080"></div>
<div class="a" style="left:111px;top:725px;border-left:3.5px solid transparent;border-right:3.5px solid transparent;border-top:4px solid #000"></div>
<svg class="a" style="left:125px;top:717px" width="32" height="17"><path d="M6,4 v8 M15,4 L9,8 L15,12 Z M27,4 L21,8 L27,12 Z" stroke="#999" fill="#a8a8a8" stroke-width="1"/></svg>
<div class="a" style="left:158px;top:717px;width:43px;height:17px;background:#fff;border:1px solid #404040;border-right-color:#f4f4f4;border-bottom-color:#f4f4f4"></div>
<div class="a" style="left:162px;top:720px;font-size:11px;line-height:13px;color:#111">1</div>
<div class="a" style="left:185px;top:719px;width:15px;height:14px;background:#d4d0c8;border:1px solid;border-color:#d4d0c8 #404040 #404040 #d4d0c8;box-shadow:inset 1px 1px 0 #fff,inset -1px -1px 0 #808080"></div>
<div class="a" style="left:189px;top:725px;border-left:3.5px solid transparent;border-right:3.5px solid transparent;border-top:4px solid #000"></div>
<svg class="a" style="left:202px;top:717px" width="34" height="17"><path d="M7,4 L13,8 L7,12 Z M20,4 L26,8 L20,12 Z M28,4 v8" stroke="#999" fill="#a8a8a8" stroke-width="1"/></svg>
<div class="a" style="left:236px;top:718px;width:179px;height:15px;background:linear-gradient(#e4e4e4,#cfcfcf);border-top:1px solid #f4f4f4;border-bottom:1px solid #888"></div>
<div class="a" style="left:313px;top:717px;font-size:12px;line-height:16px;color:#111">选择</div>
<div class="a" style="left:402px;top:721px;border-top:5px solid transparent;border-bottom:5px solid transparent;border-left:6px solid #000"></div>
<div class="a" style="left:414px;top:717px;width:15px;height:16px;background:#d4d0c8;border:1px solid;border-color:#d4d0c8 #404040 #404040 #d4d0c8;box-shadow:inset 1px 1px 0 #fff,inset -1px -1px 0 #808080"></div>
<div class="a" style="left:419px;top:721px;border-top:4px solid transparent;border-bottom:4px solid transparent;border-right:4px solid #000"></div>
<div class="a" style="left:4px;top:733px;width:1016px;height:1px;background:#404040"></div>
<div class="a" style="left:0;top:734px;width:1024px;height:4px;background:#e4e4e4;border-bottom:1px solid #808080"></div>
<div class="a" style="left:0;top:734px;width:1px;height:3px;background:#8a8a8a"></div>
<div class="a" style="left:1023px;top:734px;width:1px;height:3px;background:#8a8a8a"></div>

<!-- taskbar -->
<div class="a" style="left:0;top:738px;width:1024px;height:30px;background:#d4d0c8;border-top:1px solid #fff"></div>
<div class="a" style="left:2px;top:742px;width:47px;height:22px;background:#d4d0c8;border:1px solid;border-color:#fff #404040 #404040 #fff;box-shadow:inset -1px -1px 0 #808080"></div>
<svg class="a" style="left:4px;top:744px" width="17" height="16"><path d="M3,3 Q5,1 8,2 L7,7 Q4,6 2,7.5 Z" fill="#f05a24"/><path d="M9,2.2 Q12,3.5 15,2 L14,7.5 Q11,8.5 8,7.2 Z" fill="#7ab828"/><path d="M1.8,8.5 Q4,7 7,8 L6,13 Q3.5,12 1,13.5 Z" fill="#3a84d8"/><path d="M7.8,8.2 Q11,9.5 14,8.5 L13,14 Q10,15 7,13.5 Z" fill="#f6c21a"/></svg>
<div class="a" style="left:22px;top:745px;font-size:12px;line-height:16px;color:#000">开始</div>
<svg class="a" style="left:56px;top:745px" width="16" height="16"><circle cx="8" cy="8" r="6.5" fill="#fafafa"/><path d="M8,1.5 A6.5,6.5 0 0 1 14.5,8" stroke="#6ab83a" stroke-width="2.2" fill="none"/><path d="M14.5,8 A6.5,6.5 0 0 1 8,14.5" stroke="#f2c21a" stroke-width="2.2" fill="none"/><path d="M8,14.5 A6.5,6.5 0 0 1 1.5,8" stroke="#3a7ad8" stroke-width="2.2" fill="none"/><path d="M1.5,8 A6.5,6.5 0 0 1 8,1.5" stroke="#e04a2a" stroke-width="2.2" fill="none"/><path d="M6.3,5 L10.8,8 L6.3,11 Z" fill="#222"/></svg>
<svg class="a" style="left:79px;top:745px" width="18" height="17"><rect x="1.5" y="2.5" width="13" height="13" rx="2" fill="#dce8fa" stroke="#2a62c8" stroke-width="1.6"/><rect x="4" y="5" width="8" height="8" fill="#f8fbff"/><path d="M5,12 L11,6 M8,5.5 L11.5,5.5 L11.5,9" stroke="#2a5ab8" stroke-width="1.5" fill="none"/><circle cx="15" cy="4.5" r="1.5" fill="#e04020"/></svg>
<svg class="a" style="left:102px;top:745px" width="18" height="18"><ellipse cx="9" cy="9.5" rx="6.8" ry="6.3" fill="#2a8ae8"/><ellipse cx="9.3" cy="8.5" rx="3.4" ry="2.6" fill="#fff"/><rect x="5" y="8.6" width="8.5" height="1.8" fill="#2a8ae8"/><path d="M6,11 Q7,13.5 11,12.8" stroke="#fff" stroke-width="1.8" fill="none"/><path d="M2.5,16 Q0,13 5,7 Q12,0.5 16.5,1.5 Q17.5,3 14.5,6.5" stroke="#3a9af0" stroke-width="1.3" fill="none"/></svg>
<div class="a" style="left:130px;top:742px;font-size:14px;font-weight:bold;line-height:14px;color:#000">»</div>
<div class="a" style="left:143px;top:742px;width:160px;height:22px;background-color:#fff;background-image:linear-gradient(45deg,#d4d0c8 25%,transparent 25%,transparent 75%,#d4d0c8 75%),linear-gradient(45deg,#d4d0c8 25%,transparent 25%,transparent 75%,#d4d0c8 75%);background-size:2px 2px;background-position:0 0,1px 1px;border:1px solid;border-color:#404040 #fff #fff #404040;box-shadow:inset 1px 1px 0 #808080"></div>
<div class="a" style="left:148px;top:746px;width:15px;height:15px;background:linear-gradient(#f8a020,#c85a08);border-radius:1px;box-shadow:1px 1px 0 #7a3a00;font-size:9px;font-weight:bold;color:#ffe6a0;text-align:center;line-height:15px">Ai</div>
<div class="a" style="left:168px;top:744px;font-size:12px;line-height:16px;color:#000;white-space:pre">未标题<span class="m">-1* @ 200% (C...</span></div>
<div class="a" style="left:979px;top:742px;width:1px;height:23px;background:#808080;box-shadow:1px 0 0 #fff"></div>
<div class="a" style="left:985px;top:742px;width:37px;height:23px;border:1px solid;border-color:#808080 #fff #fff #808080"></div>
<div class="a" style="left:990px;top:744px;font-size:12px;font-weight:bold;line-height:16px;color:#000">«</div>
<svg class="a" style="left:1002px;top:745px" width="20" height="16"><rect x="1" y="3" width="8" height="6" fill="#2a3a7a"/><ellipse cx="5" cy="12" rx="4" ry="2" fill="#c8d0f0" stroke="#3a4aaa" stroke-width="0.8"/><path d="M11,2 q2,3 0,6 M14,0.5 q3,4.5 0,9" stroke="#777" fill="none" stroke-width="1"/></svg>
<svg class="a" style="left:957px;top:745px" width="18" height="16"><rect x="1.5" y="6.5" width="15" height="8" rx="1.5" fill="#fff" stroke="#111"/><g fill="#333"><rect x="3" y="8.5" width="2" height="1.5"/><rect x="6" y="8.5" width="2" height="1.5"/><rect x="9" y="8.5" width="2" height="1.5"/><rect x="12" y="8.5" width="2" height="1.5"/><rect x="3" y="11" width="2" height="1.5"/><rect x="6" y="11" width="2" height="1.5"/><rect x="9" y="11" width="2" height="1.5"/><rect x="12" y="11" width="2" height="1.5"/></g><path d="M4,5 v-2 q1.5,1.5 3,0 q1.5,1.5 3,0 q1.5,1.5 3,0 v2" stroke="#111" fill="none"/></svg>
<!-- color panel -->
<div class="a" style="left:768px;top:109px;width:216px;height:123px;background:#d6d6d6;border:1px solid #3c3c3c;border-top:none"></div>
<div class="a" style="left:769px;top:110px;width:214px;height:3px;background:#444"></div>
<div class="a" style="left:769px;top:113px;width:214px;height:17px;background:linear-gradient(#9e9e9e,#7e7e7e);border-bottom:1px solid #6a6a6a"></div>
<div class="a" style="left:769px;top:113px;width:47px;height:18px;background:linear-gradient(#eeeeee,#d6d6d6)"></div>
<div class="a" style="left:816px;top:113px;width:1px;height:17px;background:#5a5a5a"></div>
<div class="a" style="left:877px;top:113px;width:1px;height:17px;background:#5a5a5a"></div>
<svg class="a" style="left:772px;top:118px" width="8" height="10"><path d="M1,4 L4,1 L7,4 M1,6 L4,9 L7,6" stroke="#222" stroke-width="1.2" fill="none"/></svg>
<div class="a" style="left:780px;top:113px;font-size:12px;line-height:16px;color:#111">颜色</div>
<div class="a" style="left:823px;top:113px;font-size:12px;line-height:16px;color:#111">颜色参考</div>
<svg class="a" style="left:940px;top:117px" width="40" height="10"><path d="M2,1.5 L6,5 L2,8.5 Z M7,1.5 L11,5 L7,8.5 Z" fill="#222"/><rect x="19" y="0" width="1" height="10" fill="#555"/><path d="M24,3.5 h4 l-2,3 z" fill="#222"/><g fill="#222"><rect x="29" y="1" width="6" height="1"/><rect x="29" y="3.5" width="6" height="1"/><rect x="29" y="6" width="6" height="1"/><rect x="29" y="8.5" width="6" height="1"/></g></svg>
<!-- fill/stroke -->
<div class="a" style="left:775px;top:137px;width:21px;height:19px;background:#555;border:1px solid #000;box-shadow:inset 0 0 0 1px #777"></div>
<div class="a" style="left:785px;top:146px;width:20px;height:19px;background:#fff;border:2px solid #000"></div>
<div class="a" style="left:790px;top:151px;width:10px;height:9px;background:#d6d6d6;border:1px solid #000"></div>
<svg class="a" style="left:776px;top:170px" width="13" height="13"><path d="M6.5,1 L11.5,3.5 V9.5 L6.5,12 L1.5,9.5 V3.5 Z" fill="#aaa" stroke="#333" stroke-width="1"/><path d="M1.5,3.5 L6.5,6 L11.5,3.5 M6.5,6 V12" stroke="#333" fill="none" stroke-width="1"/><path d="M6.5,6 L11.5,3.5 V9.5 L6.5,12 Z" fill="#f0f0f0" stroke="#333" stroke-width="0.8"/></svg>
<div class="a" style="left:792px;top:171px;width:13px;height:13px;background:#fff;border-left:1px solid #222;border-bottom:1px solid #222;box-shadow:1px 1px 0 #f4f4f4"></div>
<div class="a" style="left:813px;top:135px;font-size:10px;line-height:12px;color:#2a2a40">C</div>
<div class="a" style="left:825px;top:137px;width:102px;height:7px;border:1px solid #111;border-width:2px 1px 1px 2px;background:linear-gradient(90deg,#fff,#00b4ec)"></div>
<svg class="a" style="left:820px;top:144px" width="11" height="7"><path d="M5.5,0.5 L10.5,6 H0.5 Z" fill="#e4e0d6" stroke="#9a9488" stroke-width="0.8"/></svg>
<div class="a" style="left:931px;top:132px;width:35px;height:17px;background:#fff;border:1px solid #f0eee8;border-top:2px solid #444;border-left:2px solid #444"></div>
<div class="a" style="left:935px;top:134px;font-size:11px;line-height:13px;color:#14142a">0.49</div>
<div class="a" style="left:967px;top:134px;font-size:11px;line-height:13px;color:#14142a">%</div>
<div class="a" style="left:813px;top:153px;font-size:10px;line-height:12px;color:#2a2a40">M</div>
<div class="a" style="left:825px;top:155px;width:102px;height:7px;border:1px solid #111;border-width:2px 1px 1px 2px;background:linear-gradient(90deg,#fff,#ec008c)"></div>
<svg class="a" style="left:820px;top:162px" width="11" height="7"><path d="M5.5,0.5 L10.5,6 H0.5 Z" fill="#e4e0d6" stroke="#9a9488" stroke-width="0.8"/></svg>
<div class="a" style="left:931px;top:150px;width:35px;height:17px;background:#fff;border:1px solid #f0eee8;border-top:2px solid #444;border-left:2px solid #444"></div>
<div class="a" style="left:935px;top:152px;font-size:11px;line-height:13px;color:#14142a">0.17</div>
<div class="a" style="left:967px;top:152px;font-size:11px;line-height:13px;color:#14142a">%</div>
<div class="a" style="left:813px;top:172px;font-size:10px;line-height:12px;color:#2a2a40">Y</div>
<div class="a" style="left:825px;top:174px;width:102px;height:7px;border:1px solid #111;border-width:2px 1px 1px 2px;background:linear-gradient(90deg,#fff,#fff200)"></div>
<svg class="a" style="left:820px;top:181px" width="11" height="7"><path d="M5.5,0.5 L10.5,6 H0.5 Z" fill="#e4e0d6" stroke="#9a9488" stroke-width="0.8"/></svg>
<div class="a" style="left:931px;top:168px;width:35px;height:17px;background:#fff;border:1px solid #f0eee8;border-top:2px solid #444;border-left:2px solid #444"></div>
<div class="a" style="left:935px;top:170px;font-size:11px;line-height:13px;color:#14142a">0.17</div>
<div class="a" style="left:967px;top:170px;font-size:11px;line-height:13px;color:#14142a">%</div>
<div class="a" style="left:813px;top:190px;font-size:10px;line-height:12px;color:#2a2a40">K</div>
<div class="a" style="left:825px;top:192px;width:102px;height:7px;border:1px solid #111;border-width:2px 1px 1px 2px;background:linear-gradient(90deg,#fff,#231f20)"></div>
<svg class="a" style="left:820px;top:199px" width="11" height="7"><path d="M5.5,0.5 L10.5,6 H0.5 Z" fill="#e4e0d6" stroke="#9a9488" stroke-width="0.8"/></svg>
<div class="a" style="left:931px;top:186px;width:35px;height:17px;background:#fff;border:1px solid #f0eee8;border-top:2px solid #444;border-left:2px solid #444"></div>
<div class="a" style="left:935px;top:188px;font-size:11px;line-height:13px;color:#14142a">0</div>
<div class="a" style="left:967px;top:188px;font-size:11px;line-height:13px;color:#14142a">%</div>

<div class="a" style="left:773px;top:205px;width:202px;height:18px;background:#000;border:1px solid #000"></div>
<div class="a" style="left:775px;top:207px;width:15px;height:15px;background:#fff"></div>
<svg class="a" style="left:775px;top:207px" width="15" height="15"><path d="M0.5,14.5 L14.5,0.5" stroke="#e0101c" stroke-width="1.8"/></svg>
<div class="a" style="left:790px;top:207px;width:168px;height:15px;background:linear-gradient(#fff 0%,rgba(255,255,255,0) 45%,rgba(0,0,0,0) 55%,#000 100%),linear-gradient(90deg,#ed1c24 0%,#f7941d 12%,#fff200 24%,#8dc63f 36%,#00a651 48%,#00aeef 60%,#2e3192 72%,#92278f 84%,#ec008c 94%,#ed1c24 100%)"></div>
<div class="a" style="left:958px;top:207px;width:15px;height:8px;background:#fff"></div>
<div class="a" style="left:958px;top:215px;width:15px;height:7px;background:#050a0a"></div>
</body></html>
